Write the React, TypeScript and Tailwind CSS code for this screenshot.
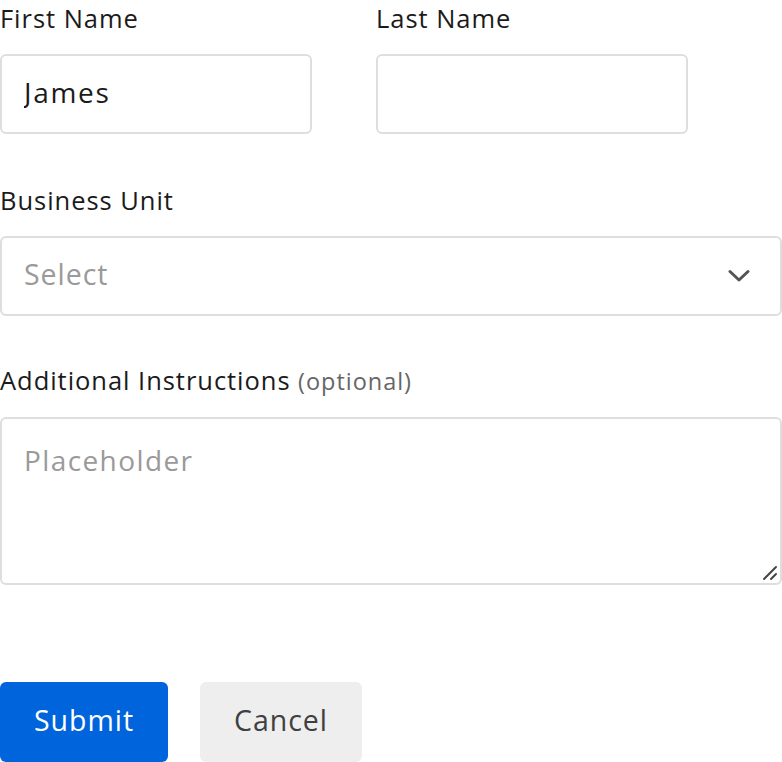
import { useState } from "react";

const font = { fontFamily: "'Open Sans', 'Noto Sans', sans-serif" };

export default function App() {
  const [first, setFirst] = useState("James");
  const [last, setLast] = useState("");

  return (
    <div className="w-[782px] bg-white text-[#1b1b1b] tracking-[0.06em]" style={font}>
      {/* Name row */}
      <div className="flex gap-[64px]">
        <div className="w-[312px]">
          <label className="block text-[25.5px] leading-[36px] mb-[18px]">First Name</label>
          <input
            value={first}
            onChange={e => setFirst(e.target.value)}
            className="w-full h-[80px] rounded-[6px] border-2 border-[#dedede] px-[22px] pb-[4px] text-[28px] tracking-[0.06em] text-[#1b1b1b] outline-none"
          />
        </div>
        <div className="w-[312px]">
          <label className="block text-[25.5px] leading-[36px] mb-[18px]">Last Name</label>
          <input
            value={last}
            onChange={e => setLast(e.target.value)}
            className="w-full h-[80px] rounded-[6px] border-2 border-[#dedede] px-[22px] text-[28px] outline-none"
          />
        </div>
      </div>

      {/* Business unit */}
      <div className="mt-[48px]">
        <label className="block text-[25.5px] leading-[36px] mb-[18px]">Business Unit</label>
        <div className="flex items-center justify-between h-[80px] rounded-[6px] border-2 border-[#dedede] pl-[22px] pr-[30px]">
          <span className="text-[28.5px] text-[#9a9a9a] pb-[4px]">Select</span>
          <svg width="22" height="14" viewBox="0 0 22 14" fill="none">
            <path d="M2 2.5 L11 11 L20 2.5" stroke="#555" strokeWidth="3" strokeLinecap="round" strokeLinejoin="round" />
          </svg>
        </div>
      </div>

      {/* Instructions */}
      <div className="mt-[46px]">
        <label className="block text-[25.5px] leading-[36px] mb-[18px]">
          Additional Instructions <span className="text-[23.5px] text-[#666]">(optional)</span>
        </label>
        <div className="relative">
          <textarea
            placeholder="Placeholder"
            className="block w-full h-[168px] resize-none rounded-[6px] border-2 border-[#dedede] px-[22px] pt-[23px] text-[28px] leading-[36px] tracking-[0.05em] placeholder:text-[#9a9a9a] outline-none"
            style={font}
          />
          <svg className="absolute right-[4px] bottom-[4px]" width="16" height="16" viewBox="0 0 16 16" fill="none">
            <path d="M2 14 L14 2 M9 14 L14 9" stroke="#444" strokeWidth="2" strokeLinecap="round" />
          </svg>
        </div>
      </div>

      {/* Actions */}
      <div className="flex gap-[32px] mt-[97px]">
        <button className="w-[168px] h-[80px] rounded-[6px] bg-[#0064dc] text-white text-[28.5px] pb-[4px]">Submit</button>
        <button className="w-[162px] h-[80px] rounded-[6px] bg-[#eeeeee] text-[#404040] text-[28.5px] pb-[4px]">Cancel</button>
      </div>
    </div>
  );
}
